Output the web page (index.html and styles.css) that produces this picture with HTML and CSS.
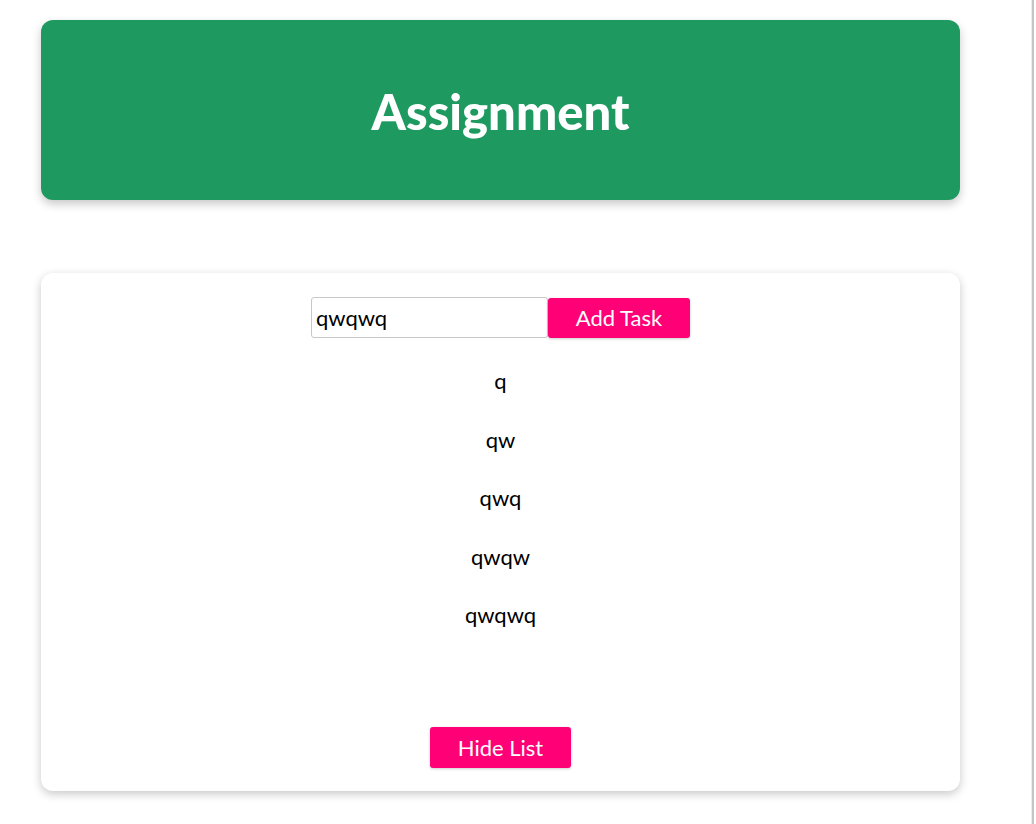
FILE: index.html
```html
<!DOCTYPE html>
<html lang="en">
<head>
<meta charset="utf-8">
<title>Assignment</title>
<link rel="stylesheet" href="styles.css">
</head>
<body>
<div class="page">
  <main class="main">
    <header class="banner">
      <h1 class="banner-title">Assignment</h1>
    </header>
    <section class="card">
      <form class="add-row" onsubmit="return false">
        <input class="task-input" type="text" value="qwqwq">
        <button class="btn btn-add" type="button">Add Task</button>
      </form>
      <ul class="task-list">
        <li class="task">q</li>
        <li class="task">qw</li>
        <li class="task">qwq</li>
        <li class="task">qwqw</li>
        <li class="task">qwqwq</li>
      </ul>
      <button class="btn btn-hide" type="button">Hide List</button>
    </section>
  </main>
  <div class="edge"></div>
  <div class="tail"></div>
</div>
</body>
</html>
```

FILE: styles.css
```css
* { box-sizing: border-box; }
html, body { margin: 0; padding: 0; background: #fff; }
body {
  font-family: "Lato", "Open Sans", sans-serif;
  color: #000;
}
.page {
  display: flex;
  height: 824px;
  overflow: hidden;
}
.main {
  width: 1032px;
  flex: none;
  padding: 20px 0 0 41px;
  border-right: 1px solid #ececec;
}
.edge {
  width: 2px;
  flex: none;
  background: #c4c4c4;
}
.tail {
  flex: 1;
  background: #fff;
}
.banner {
  width: 919px;
  height: 180px;
  background: #1e9a60;
  border-radius: 12px;
  box-shadow: 0 4px 10px rgba(0,0,0,0.22);
  display: flex;
  align-items: center;
  justify-content: center;
}
.banner-title {
  margin: 0;
  color: #fff;
  font-size: 49px;
  font-weight: 900;
  position: relative;
  top: 1px;
}
.card {
  margin-top: 73px;
  width: 919px;
  background: #fff;
  border-radius: 12px;
  box-shadow: 0 3px 10px rgba(0,0,0,0.22);
  padding: 24px 0 23px;
  display: flex;
  flex-direction: column;
  align-items: center;
}
.add-row {
  display: flex;
  align-items: center;
  margin: 0;
}
.task-input {
  width: 237px;
  height: 41px;
  border: 1px solid #c8c8c8;
  border-radius: 3px;
  padding: 0 4px;
  font-family: inherit;
  font-size: 22px;
  color: #000;
  outline: none;
}
.btn {
  background: #ff0077;
  color: #fff;
  border: none;
  border-radius: 3px;
  font-family: inherit;
  font-size: 22px;
  box-shadow: 0 1px 3px rgba(0,0,0,0.2);
  cursor: pointer;
}
.btn-add {
  width: 142px;
  height: 40px;
}
.task-list {
  list-style: none;
  margin: 14px 0 0;
  padding: 0;
  text-align: center;
  font-size: 22px;
}
.task {
  line-height: 30px;
  padding: 14px 0;
  height: 58.5px;
}
.btn-hide {
  margin-top: 82px;
  width: 141px;
  height: 41px;
}
```
